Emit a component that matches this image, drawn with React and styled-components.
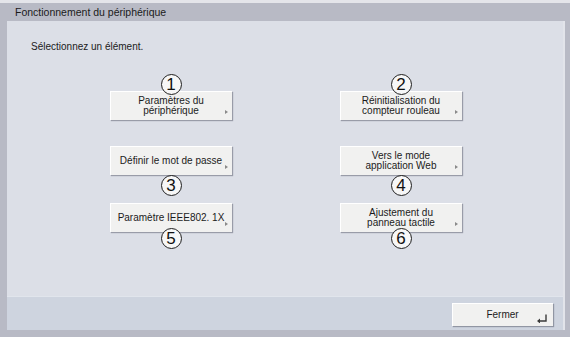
import React from "react";
import styled, { createGlobalStyle } from "styled-components";

const Global = createGlobalStyle`
  html, body { margin: 0; padding: 0; }
  body { font-family: "Liberation Sans", Arial, sans-serif; background: #b8bac5; }
`;

const Screen = styled.div`
  width: 570px;
  height: 337px;
  display: flex;
  flex-direction: column;
  background: #b8bac5;
  box-sizing: border-box;
  overflow: hidden;
`;

const TopStrip = styled.div`
  height: 3px;
  background: #e4e5ea;
`;

const TitleBar = styled.div`
  height: 18px;
  display: flex;
  align-items: center;
  padding-left: 15px;
  font-size: 10.5px;
  color: #1b1b1b;
`;

const Panel = styled.div`
  flex: 1;
  margin: 0 5px 7px 7px;
  display: flex;
  flex-direction: column;
  border-right: 2px solid #e2e4ea;
`;

const Content = styled.div`
  flex: 1;
  background: #dcdfe7;
  padding: 19px 0 0 24px;
  box-sizing: border-box;
`;

const Prompt = styled.div`
  font-size: 10px;
  line-height: 13px;
  color: #1b1b1b;
`;

const Grid = styled.div`
  display: grid;
  grid-template-columns: 122px 122px;
  column-gap: 108px;
  margin: 21px 0 0 79px;
`;

const Cell = styled.div`
  display: flex;
  flex-direction: column;
  align-items: center;
  margin-top: ${(p) => p.$mt || 0}px;
`;

const Num = styled.div`
  width: 19px;
  height: 19px;
  border: 1px solid #1e1e1e;
  border-radius: 50%;
  background: #f7f7f7;
  display: flex;
  align-items: center;
  justify-content: center;
  font-size: 17px;
  line-height: 1;
  color: #111;
  position: relative;
  z-index: 1;
  margin-top: ${(p) => p.$mt || 0}px;
  margin-bottom: ${(p) => p.$mb || 0}px;
`;

const ItemButton = styled.button`
  position: relative;
  width: 122px;
  height: 29px;
  border: none;
  padding: 1px 4px 0;
  background: #f1f1f0;
  box-shadow: 1px 1px 1px rgba(70, 75, 90, 0.45), inset 1px 1px 0 #ffffff;
  font-family: "Liberation Sans", Arial, sans-serif;
  font-size: 10px;
  line-height: 10.5px;
  color: #1b1b1b;
  text-align: center;
  white-space: nowrap;
  display: flex;
  align-items: center;
  justify-content: center;
  box-sizing: border-box;
`;

const Arrow = styled.span`
  position: absolute;
  right: 4px;
  bottom: 6px;
  width: 0;
  height: 0;
  border-top: 2.5px solid transparent;
  border-bottom: 2.5px solid transparent;
  border-left: 3px solid #8a8a8a;
`;

const Footer = styled.div`
  height: 34px;
  background: #ced4df;
  border-top: 1px solid #e1e5ec;
  box-sizing: border-box;
  display: flex;
  justify-content: flex-end;
  padding: 6px 10px 0 0;
`;

const CloseButton = styled.button`
  position: relative;
  width: 101px;
  height: 23px;
  border: none;
  background: #f1f1f0;
  box-shadow: 1px 1px 1px rgba(70, 75, 90, 0.45), inset 1px 1px 0 #ffffff;
  font-family: "Liberation Sans", Arial, sans-serif;
  font-size: 10px;
  color: #1b1b1b;
  padding: 0;
`;

const ReturnIcon = styled.svg`
  position: absolute;
  right: 5px;
  bottom: 3px;
`;

const items = [
  { n: "1", lines: ["Paramètres du", "périphérique"], pos: "top" },
  { n: "2", lines: ["Réinitialisation du", "compteur rouleau"], pos: "top" },
  { n: "3", lines: ["Définir le mot de passe"], pos: "bottom", mt: 26 },
  { n: "4", lines: ["Vers le mode", "application Web"], pos: "bottom", mt: 26 },
  { n: "5", lines: ["Paramètre IEEE802. 1X"], pos: "overlap", mt: 7 },
  { n: "6", lines: ["Ajustement du", "panneau tactile"], pos: "overlap", mt: 7 },
];

function Item({ it }) {
  const btn = (
    <ItemButton>
      <span>
        {it.lines.map((l, i) => (
          <React.Fragment key={i}>
            {i > 0 && <br />}
            {l}
          </React.Fragment>
        ))}
      </span>
      <Arrow />
    </ItemButton>
  );
  if (it.pos === "top") {
    return (
      <Cell $mt={it.mt}>
        <Num $mb={-4}>{it.n}</Num>
        {btn}
      </Cell>
    );
  }
  return (
    <Cell $mt={it.mt}>
      {btn}
      <Num $mt={it.pos === "overlap" ? -4 : 0}>{it.n}</Num>
    </Cell>
  );
}

export default function App() {
  return (
    <Screen>
      <Global />
      <TopStrip />
      <TitleBar>Fonctionnement du périphérique</TitleBar>
      <Panel>
        <Content>
          <Prompt>Sélectionnez un élément.</Prompt>
          <Grid>
            {items.map((it) => (
              <Item key={it.n} it={it} />
            ))}
          </Grid>
        </Content>
        <Footer>
          <CloseButton>
            Fermer
            <ReturnIcon width="12" height="9" viewBox="0 0 12 9">
              <path d="M10 0.5 V7 H3" fill="none" stroke="#3a3a3a" strokeWidth="1.4" />
              <path d="M1 7 L4 4.5 V9.5 Z" fill="#3a3a3a" />
            </ReturnIcon>
          </CloseButton>
        </Footer>
      </Panel>
    </Screen>
  );
}
